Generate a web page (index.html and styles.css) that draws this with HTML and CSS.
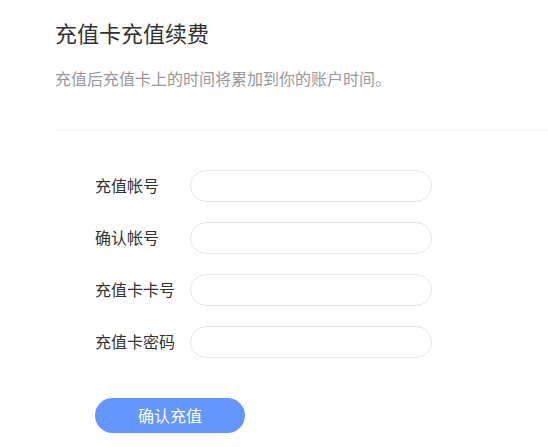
FILE: index.html
```html
<!DOCTYPE html>
<html lang="zh-CN">

<head>
    <meta charset="UTF-8">
    <title>充值卡充值续费</title>
    <link rel="stylesheet" href="styles.css">
</head>

<body>
    <div class="page">
        <div class="page-head">
            <h1>充值卡充值续费</h1>
            <p class="tip">充值后充值卡上的时间将累加到你的账户时间。</p>
        </div>
        <form class="recharge-form">
            <div class="form-row">
                <label for="account">充值帐号</label>
                <input type="text" id="account">
            </div>
            <div class="form-row">
                <label for="account2">确认帐号</label>
                <input type="text" id="account2">
            </div>
            <div class="form-row">
                <label for="cardNo">充值卡卡号</label>
                <input type="text" id="cardNo">
            </div>
            <div class="form-row">
                <label for="cardPwd">充值卡密码</label>
                <input type="password" id="cardPwd">
            </div>
            <button type="submit" class="submit-btn">确认充值</button>
        </form>
    </div>
</body>

</html>
```

FILE: styles.css
```css
body {
    font-family: "Noto Sans CJK SC", "Noto Sans", sans-serif;
    background: #fff;
    color: #333;
    margin: 0;
    padding: 0;
}

.page {
    padding: 17px 0 0 55px;
}

.page-head {
    padding-bottom: 38px;
    border-bottom: 1px solid #f0f0f0;
}

h1 {
    margin: 0;
    font-size: 22px;
    line-height: 30px;
    font-weight: normal;
    color: #333;
}

.tip {
    margin: 19px 0 0 0;
    padding-bottom: 1px;
    font-size: 16px;
    line-height: 24px;
    color: #999;
}

.recharge-form {
    display: flex;
    flex-direction: column;
    gap: 20px;
    padding: 40px 0 0 40px;
}

.form-row {
    display: flex;
    align-items: center;
}

.form-row label {
    width: 95px;
    margin-bottom: 3px;
    font-size: 16px;
    line-height: 28px;
    color: #333;
}

.form-row input {
    box-sizing: border-box;
    width: 242px;
    height: 32px;
    padding: 0 14px;
    border: 1px solid #e6e6e6;
    border-radius: 16px;
    font-size: 14px;
    outline: none;
    background: #fff;
}

.form-row input:focus {
    border-color: #6396ff;
}

.submit-btn {
    margin-top: 20px;
    width: 150px;
    height: 35px;
    padding: 0 0 2px 0;
    border: none;
    border-radius: 18px;
    background: #6396ff;
    color: #fff;
    font-family: inherit;
    font-size: 16px;
    cursor: pointer;
}
```
